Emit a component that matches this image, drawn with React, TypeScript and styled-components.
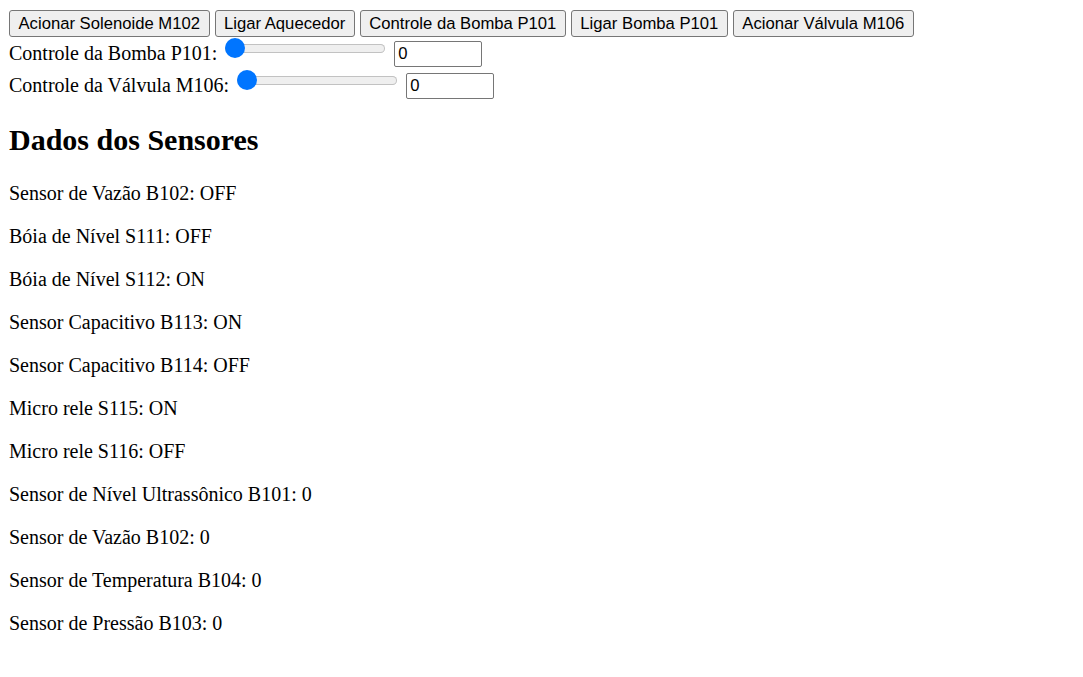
import React, { useState } from "react";
import styled, { createGlobalStyle } from "styled-components";

const GlobalStyle = createGlobalStyle`
  html, body {
    margin: 0;
    padding: 0;
    background: #ffffff;
  }
  body {
    font-family: "Liberation Serif", "Times New Roman", serif;
    font-size: 20px;
    color: #000000;
  }
`;

const Page = styled.div`
  padding: 10px 9px;
`;

const ButtonBar = styled.div`
  display: flex;
  gap: 5px;
  height: 27px;
  margin-bottom: 1px;
`;

const ActionButton = styled.button`
  font-family: "Liberation Sans", Arial, sans-serif;
  font-size: 16.67px;
  line-height: 19px;
  height: 27px;
  padding: 3px 8.5px;
  border: 1px solid #767676;
  border-radius: 3px;
  background: #efefef;
  color: #000000;
  cursor: pointer;
  box-sizing: border-box;
  &:hover {
    background: #e5e5e5;
  }
`;

const ControlRow = styled.div`
  display: flex;
  align-items: center;
  height: 30px;
  margin-bottom: 2px;
`;

const Label = styled.label`
  font-size: 20px;
  line-height: 23px;
  white-space: nowrap;
`;

const Range = styled.input.attrs({ type: "range" })`
  -webkit-appearance: none;
  appearance: none;
  width: 160px;
  height: 20px;
  margin: 0 9px 10px 8px;
  padding: 0;
  background: transparent;

  &::-webkit-slider-runnable-track {
    height: 9px;
    border-radius: 5px;
    background: #efefef;
    box-shadow: inset 0 0 0 1px #c2c2c2;
  }

  &::-webkit-slider-thumb {
    -webkit-appearance: none;
    appearance: none;
    width: 20px;
    height: 20px;
    margin-top: -5.5px;
    border-radius: 50%;
    background: #0075ff;
    border: none;
  }
`;

const NumberInput = styled.input`
  box-sizing: border-box;
  width: 88px;
  height: 26px;
  padding: 1px 3px;
  border: 1px solid #767676;
  border-radius: 2px;
  font-family: "Liberation Sans", Arial, sans-serif;
  font-size: 16.67px;
  color: #000000;
  background: #ffffff;
  margin-top: 1px;
`;

const Heading = styled.h2`
  font-size: 30px;
  font-weight: bold;
  margin: 23px 0 25px;
  line-height: normal;
`;

const Reading = styled.p`
  margin: 20px 0;
  font-size: 20px;
  line-height: normal;
`;

const buttons = [
  "Acionar Solenoide M102",
  "Ligar Aquecedor",
  "Controle da Bomba P101",
  "Ligar Bomba P101",
  "Acionar Válvula M106",
];

const readings = [
  "Sensor de Vazão B102: OFF",
  "Bóia de Nível S111: OFF",
  "Bóia de Nível S112: ON",
  "Sensor Capacitivo B113: ON",
  "Sensor Capacitivo B114: OFF",
  "Micro rele S115: ON",
  "Micro rele S116: OFF",
  "Sensor de Nível Ultrassônico B101: 0",
  "Sensor de Vazão B102: 0",
  "Sensor de Temperatura B104: 0",
  "Sensor de Pressão B103: 0",
];

export default function App() {
  const [pump, setPump] = useState("0");
  const [valve, setValve] = useState("0");

  return (
    <Page>
      <GlobalStyle />
      <ButtonBar>
        {buttons.map((b) => (
          <ActionButton key={b}>{b}</ActionButton>
        ))}
      </ButtonBar>
      <ControlRow>
        <Label>Controle da Bomba P101:</Label>
        <Range
          min={0}
          max={100}
          value={pump}
          onChange={(e) => setPump(e.target.value)}
        />
        <NumberInput
          type="text"
          value={pump}
          onChange={(e) => setPump(e.target.value)}
        />
      </ControlRow>
      <ControlRow>
        <Label>Controle da Válvula M106:</Label>
        <Range
          min={0}
          max={100}
          value={valve}
          onChange={(e) => setValve(e.target.value)}
        />
        <NumberInput
          type="text"
          value={valve}
          onChange={(e) => setValve(e.target.value)}
        />
      </ControlRow>
      <Heading>Dados dos Sensores</Heading>
      {readings.map((r, i) => (
        <Reading key={i}>{r}</Reading>
      ))}
    </Page>
  );
}
